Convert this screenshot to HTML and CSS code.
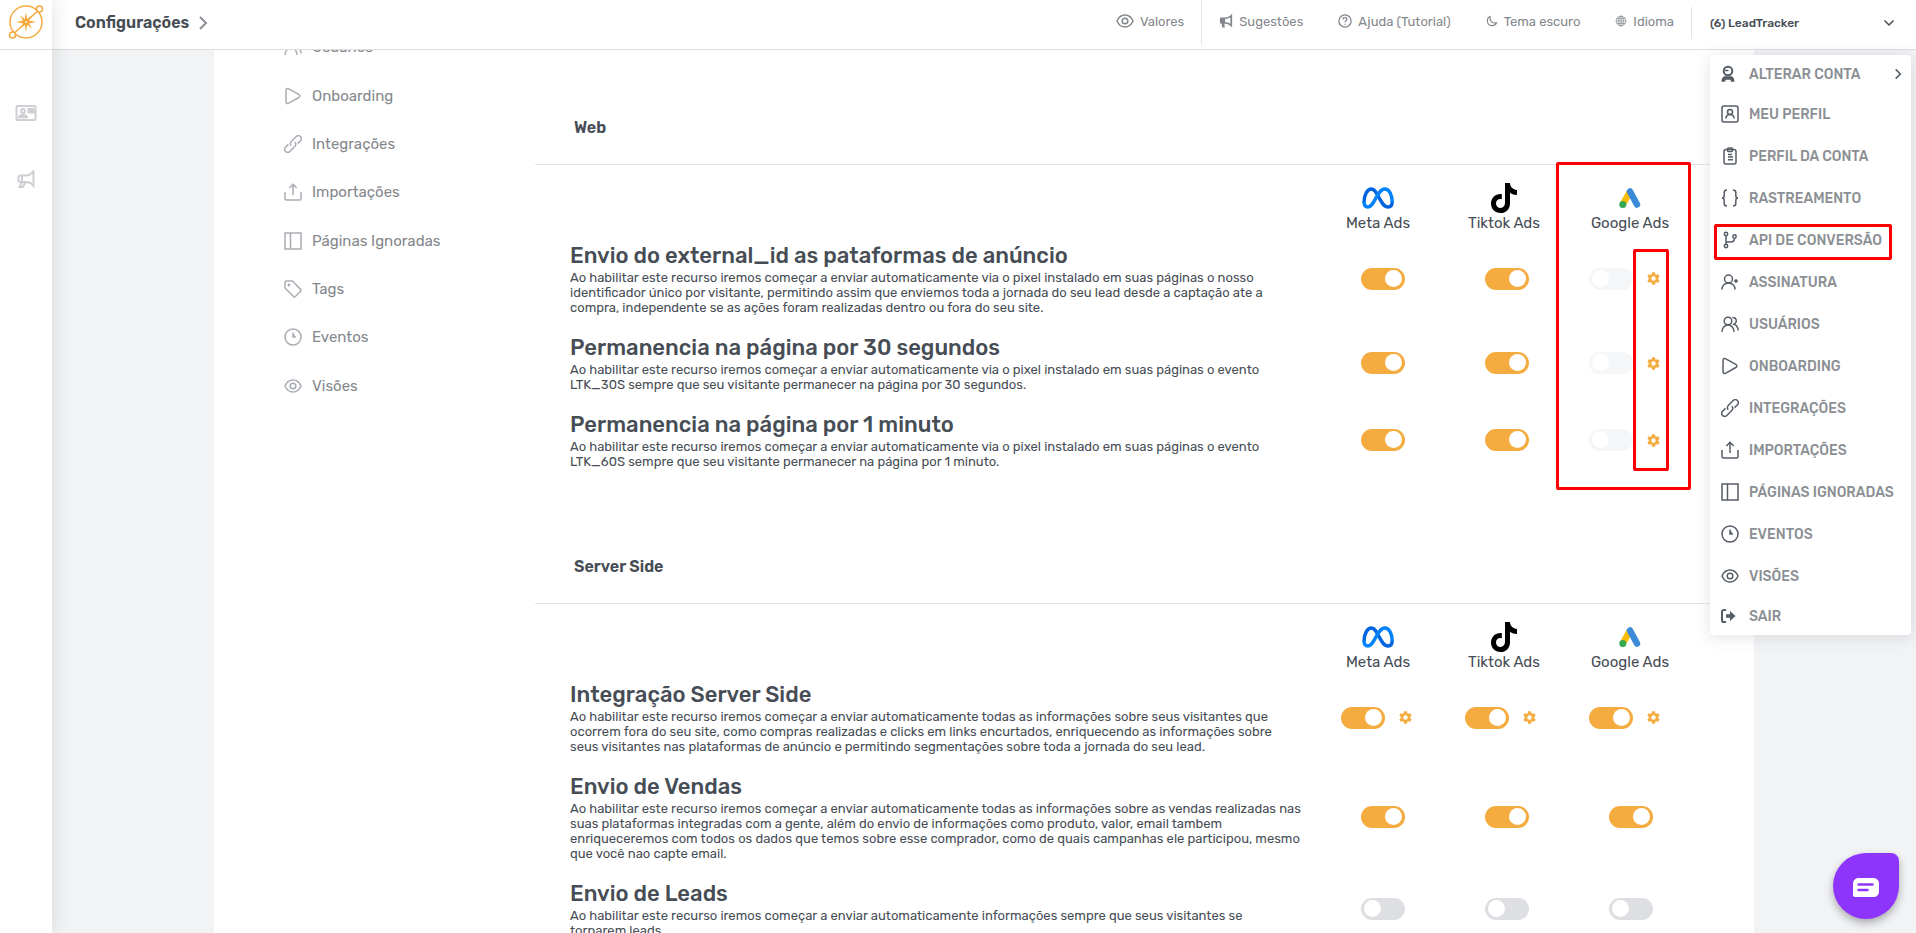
FILE: index.html
```html
<!DOCTYPE html>
<html lang="pt-BR">
<head>
    <meta charset="UTF-8">
    <meta name="viewport" content="width=device-width, initial-scale=1.0">
    <title>LeadTracker - Configurações</title>
    <link rel="stylesheet" href="styles.css">
</head>
<body>
  <svg class="sprite" aria-hidden="true">
    <symbol id="i-play" viewBox="0 0 18 18"><path d="M2 3.200C2 1.800 3.200 1 4.400 1.600l10.400 5.700c1.400.7 1.400 2.500 0 3.200L4.400 16.400C3.200 17 2 16.200 2 14.800z"/></symbol>
    <symbol id="i-link" viewBox="0 0 18 18"><g transform="rotate(-45 9 9)"><path d="M6.500 9a3 3 0 0 1 3-3h7a3 3 0 0 1 0 6h-4"/><path d="M11.500 9a3 3 0 0 1-3 3h-7a3 3 0 0 1 0-6h4"/></g></symbol>
    <symbol id="i-upload" viewBox="0 0 18 18"><path d="M1 9v6.500C1 16.400 1.600 17 2.500 17h13c.9 0 1.500-.6 1.500-1.500V9M9 12V1.500M5.300 5L9 1.300 12.700 5"/></symbol>
    <symbol id="i-columns" viewBox="0 0 18 18"><path d="M1 1h16v16H1zM6.500 1v16"/></symbol>
    <symbol id="i-tag" viewBox="0 0 18 18"><path d="M1 2v6l8.500 8.500c.6.600 1.200.6 1.800 0l5.300-5.300c.6-.6.6-1.200 0-1.800L8.500 1H2c-.6 0-1 .4-1 1z"/><circle cx="5" cy="5" r=".7"/></symbol>
    <symbol id="i-clock" viewBox="0 0 18 18"><circle cx="9" cy="9" r="8"/><path d="M9 4.500V9h3M10 6.500v2"/></symbol>
    <symbol id="i-eye" viewBox="0 0 18 18"><path d="M1 9c1.500-3.500 4.500-6 8-6s6.500 2.500 8 6c-1.500 3.500-4.500 6-8 6s-6.500-2.500-8-6z"/><circle cx="9" cy="9" r="2.800"/></symbol>
    <symbol id="i-users" viewBox="0 0 18 18"><circle cx="7" cy="6" r="3.800"/><path d="M1 17c0-4 2.500-7 6-7s6 3 6 7M11.500 2.400c2.800 0 3.800 1.600 3.800 3.500 0 1.600-.8 2.700-2.300 3.300 2.500.8 4 3.300 4.200 6.300"/></symbol>
    <symbol id="i-user-plus" viewBox="0 0 18 18"><circle cx="7.500" cy="6" r="4"/><path d="M1 16.500c0-3.800 2.800-6.500 6.500-6.500s6.500 2.700 6.500 6.500M15 6v4M13 8h4"/></symbol>
    <symbol id="i-profile" viewBox="0 0 18 18"><rect x="1" y="1" width="16" height="16" rx="2"/><circle cx="9" cy="7" r="2.500"/><path d="M4.800 13.500c.3-2.500 1.900-4 4.200-4s3.900 1.500 4.200 4"/></symbol>
    <symbol id="i-clip" viewBox="0 0 18 18"><rect x="3" y="2.500" width="12" height="14.500" rx="2"/><rect x="6.500" y="1" width="5" height="3.500" rx="1"/><path d="M7 7.500h4M7 10h5M7 12.800h5"/></symbol>
    <symbol id="i-braces" viewBox="0 0 18 18"><path d="M6 1C4 1 3.200 1.600 3.200 3.500v3C3.200 8 2.500 9 1 9c1.500 0 2.200 1 2.200 2.500v3C3.200 16.400 4 17 6 17M12 1c2 0 2.800.6 2.800 2.500v3C14.800 8 15.500 9 17 9c-1.500 0-2.200 1-2.200 2.500v3c0 1.900-.8 2.500-2.800 2.500"/></symbol>
    <symbol id="i-branch" viewBox="0 0 18 18"><circle cx="5" cy="3" r="1.700"/><circle cx="5" cy="15" r="1.700"/><circle cx="13.500" cy="5.500" r="1.700"/><path d="M5 4.700v8.600M13.500 7.200c0 2.300-1.500 3.800-4 3.800H5"/></symbol>
    <symbol id="i-agent" viewBox="0 0 18 18"><circle cx="7" cy="6" r="4.300" stroke-width="2"/><path d="M4 5.500h3.500"/><path class="solid" d="M.5 16.800c0-3.300 1.400-5.600 3.600-5.600h5.800c2.200 0 3.600 2.300 3.600 5.600h-3.400l-.8-2H4.800l-.8 2z"/></symbol>
    <symbol id="i-exit" viewBox="0 0 18 18"><path stroke-width="2" d="M5 3H2.800C1.600 3 1 3.700 1 4.800v8.400C1 14.300 1.600 15 2.800 15H5"/><path class="solid" d="M5 7.300h4V4l5.500 5L9 14v-3.300H5z"/></symbol>
    <symbol id="i-mega" viewBox="0 0 18 18"><path d="M16.500 1v15c-2-2.800-4.500-4-7.500-4H3.500C2 12 1.500 11.500 1.500 10V7.500C1.500 6 2 5.500 3.500 5.500H9c3 0 5.500-1.500 7.500-4.500zM5 5.500V12l-2.500 5h3.500L8.500 12"/></symbol>
    <symbol id="i-mega-solid" viewBox="0 0 16 16"><path class="solid" d="M1 5.500C1 4.500 1.500 4 2.500 4H7v7H6l.8 4.500H3.500L3 11c-1.300 0-2-.6-2-1.700z"/><path stroke-width="2" d="M7 5c3 0 5-1 7-3v11c-2-2-4-3-7-3"/></symbol>
    <symbol id="i-help" viewBox="0 0 16 16"><circle cx="8" cy="8" r="7"/><path d="M5.800 6.300c0-1.300.9-2.100 2.200-2.100s2.200.8 2.200 1.900c0 1.600-2.200 1.600-2.200 3.300M8 11v1.400"/></symbol>
    <symbol id="i-moon" viewBox="0 0 16 16"><path d="M5.500 2C3 3 1.800 5.200 1.800 7.800c0 3.600 2.800 6.400 6.400 6.400 2.700 0 4.900-1.400 5.900-3.900-5.600 1.300-9.600-2.700-8.600-8.300z"/></symbol>
    <symbol id="i-globe" viewBox="0 0 16 16"><circle cx="8" cy="8" r="6.500"/><ellipse cx="8" cy="8" rx="3" ry="6.500"/><path d="M8 1.500v13M1.500 8h13M2.500 4.800h11M2.500 11.200h11"/></symbol>
    <symbol id="i-card" viewBox="0 0 22 18"><rect x="1.500" y="2" width="19" height="14" rx="1"/><circle cx="8" cy="7" r="1.900"/><path d="M4 13.200c.4-1.600 2-2.200 4-2.200s3.600.6 4 2.200zM13.500 5h5v3.500h-5zM13.500 5.200L16 7l2.500-1.800"/></symbol>
    <symbol id="i-right" viewBox="0 0 12 18"><path d="M3 3l6 6-6 6"/></symbol>
    <symbol id="i-down" viewBox="0 0 12 12"><path d="M1.500 3.500L6 8l4.500-4.500"/></symbol>
    <symbol id="i-gear" viewBox="0 0 24 24"><path class="solid" fill-rule="evenodd" d="M19.430 12.980c.04-.32.07-.64.07-.98s-.03-.66-.07-.98l2.110-1.650c.19-.15.24-.42.12-.64l-2-3.460c-.12-.22-.39-.3-.61-.22l-2.490 1c-.52-.4-1.080-.73-1.690-.98l-.38-2.650C14.460 2.180 14.250 2 14 2h-4c-.25 0-.46.18-.49.42l-.38 2.650c-.61.25-1.170.59-1.690.98l-2.490-1c-.23-.09-.49 0-.61.22l-2 3.460c-.13.22-.07.49.12.64l2.110 1.650c-.04.32-.07.65-.07.98s.03.66.07.98l-2.110 1.650c-.19.15-.24.42-.12.64l2 3.460c.12.22.39.3.61.22l2.490-1c.52.4 1.080.73 1.690.98l.38 2.650c.03.24.24.42.49.42h4c.25 0 .46-.18.49-.42l.38-2.650c.61-.25 1.170-.59 1.690-.98l2.490 1c.23.09.49 0 .61-.22l2-3.460c.12-.22.07-.49-.12-.64zM12 15.500a3.500 3.500 0 1 1 0-7 3.500 3.500 0 0 1 0 7z"/></symbol>
    <symbol id="i-meta" viewBox="0 0 32 22">
      <path d="M2 15.500C2 8.500 5 2 9.500 2c6.500 0 8.500 18 16.500 18 3 0 4.200-2.200 4.200-5.500" stroke="#0064e0" stroke-width="3.400" fill="none"/>
      <path d="M2 14.500C2 18 3.200 20 6 20c6.500 0 9-18 16.800-18C27.500 2 30.200 8.500 30.200 15" stroke="#0082fb" stroke-width="3.400" fill="none"/>
    </symbol>
    <symbol id="i-tiktok" viewBox="0 0 26 30"><path fill="#000" d="M14 0h4.900c.3 3.800 2.800 6.600 7.100 7v5c-2.700 0-5-.8-7-2.200v10.600C19 26 14.900 30 9.500 30S0 25.900 0 20.500c0-5.700 4.700-10.100 10.800-9.400v5.200c-3.200-.9-5.800 1.200-5.800 4.100 0 2.600 2 4.500 4.500 4.500S14 23 14 20z"/></symbol>
    <symbol id="i-google" viewBox="0 0 22 20">
      <path d="M11 3.500L4 16" stroke="#fbbc04" stroke-width="6.500"/>
      <path d="M11 3.500L18 16.500" stroke="#3c8bd9" stroke-width="6.500" stroke-linecap="round"/>
      <circle cx="3.800" cy="16.500" r="3.500" fill="#34a853"/>
    </symbol>
  </svg>

  <aside class="sidebar">
    <a class="logo" href="#" aria-label="LeadTracker">
      <svg viewBox="0 0 36 36">
        <circle cx="18" cy="18" r="16"/>
        <circle class="dot" cx="31.500" cy="5" r="3"/>
        <circle class="dot" cx="4.500" cy="31" r="3"/>
        <path d="M29.300 7.200L21 15M6.700 28.800L15 21"/>
        <path class="solid" d="M18 8l1.200 6.900 4.900-3.700-3 5.300L28 18l-6.900 1.500 3 5.300-4.900-3.700L18 28l-1.200-6.900-4.900 3.700 3-5.300L8 18l6.900-1.500-3-5.300 4.900 3.700z"/>
        <circle class="dot" cx="18" cy="18" r="1.600"/>
      </svg>
    </a>
    <nav class="side-links">
      <a href="#" aria-label="Contatos"><svg class="icon-card"><use href="#i-card"/></svg></a>
      <a href="#" aria-label="Campanhas"><svg class="icon"><use href="#i-mega"/></svg></a>
    </nav>
  </aside>

  <div class="page">
    <header class="topbar">
      <h1>Configurações <svg class="crumb"><use href="#i-right"/></svg></h1>
      <nav class="top-links">
        <a class="values" href="#"><svg class="icon"><use href="#i-eye"/></svg>Valores</a>
        <a href="#"><svg class="icon-sm"><use href="#i-mega-solid"/></svg>Sugestões</a>
        <a href="#"><svg class="icon-sm"><use href="#i-help"/></svg>Ajuda (Tutorial)</a>
        <a href="#"><svg class="icon-xs"><use href="#i-moon"/></svg>Tema escuro</a>
        <a href="#"><svg class="icon-xs globe"><use href="#i-globe"/></svg>Idioma</a>
      </nav>
      <button class="account" type="button">(6) LeadTracker <svg class="caret"><use href="#i-down"/></svg></button>
    </header>

    <main class="main">
      <div class="card">
        <nav class="settings-menu">
          <a href="#"><svg class="icon"><use href="#i-users"/></svg>Usuários</a>
          <a href="#"><svg class="icon"><use href="#i-play"/></svg>Onboarding</a>
          <a href="#"><svg class="icon"><use href="#i-link"/></svg>Integrações</a>
          <a href="#"><svg class="icon"><use href="#i-upload"/></svg>Importações</a>
          <a href="#"><svg class="icon"><use href="#i-columns"/></svg>Páginas Ignoradas</a>
          <a href="#"><svg class="icon"><use href="#i-tag"/></svg>Tags</a>
          <a href="#"><svg class="icon"><use href="#i-clock"/></svg>Eventos</a>
          <a href="#"><svg class="icon"><use href="#i-eye"/></svg>Visões</a>
        </nav>

        <div class="content">
          <section class="group">
            <h2>Web</h2>
            <div class="platforms">
              <div class="platform"><svg class="meta"><use href="#i-meta"/></svg><span>Meta Ads</span></div>
              <div class="platform"><svg class="tiktok"><use href="#i-tiktok"/></svg><span>Tiktok Ads</span></div>
              <div class="platform"><svg class="google"><use href="#i-google"/></svg><span>Google Ads</span></div>
            </div>
            <div class="row">
              <div class="info">
                <h3>Envio do external_id as pataformas de anúncio</h3>
                <p>Ao habilitar este recurso iremos começar a enviar automaticamente via o pixel instalado em suas páginas o nosso identificador único por visitante, permitindo assim que enviemos toda a jornada do seu lead desde a captação ate a compra, independente se as ações foram realizadas dentro ou fora do seu site.</p>
              </div>
              <div class="cell"><input type="checkbox" class="toggle" aria-label="External id Meta Ads" checked></div>
              <div class="cell"><input type="checkbox" class="toggle" aria-label="External id Tiktok Ads" checked></div>
              <div class="cell"><input type="checkbox" class="toggle" aria-label="External id Google Ads" disabled><button class="gear" type="button" aria-label="Configurar"><svg><use href="#i-gear"/></svg></button></div>
            </div>
            <div class="row">
              <div class="info">
                <h3>Permanencia na página por 30 segundos</h3>
                <p>Ao habilitar este recurso iremos começar a enviar automaticamente via o pixel instalado em suas páginas o evento LTK_30S sempre que seu visitante permanecer na página por 30 segundos.</p>
              </div>
              <div class="cell"><input type="checkbox" class="toggle" aria-label="30 segundos Meta Ads" checked></div>
              <div class="cell"><input type="checkbox" class="toggle" aria-label="30 segundos Tiktok Ads" checked></div>
              <div class="cell"><input type="checkbox" class="toggle" aria-label="30 segundos Google Ads" disabled><button class="gear" type="button" aria-label="Configurar"><svg><use href="#i-gear"/></svg></button></div>
            </div>
            <div class="row">
              <div class="info">
                <h3>Permanencia na página por 1 minuto</h3>
                <p>Ao habilitar este recurso iremos começar a enviar automaticamente via o pixel instalado em suas páginas o evento LTK_60S sempre que seu visitante permanecer na página por 1 minuto.</p>
              </div>
              <div class="cell"><input type="checkbox" class="toggle" aria-label="1 minuto Meta Ads" checked></div>
              <div class="cell"><input type="checkbox" class="toggle" aria-label="1 minuto Tiktok Ads" checked></div>
              <div class="cell"><input type="checkbox" class="toggle" aria-label="1 minuto Google Ads" disabled><button class="gear" type="button" aria-label="Configurar"><svg><use href="#i-gear"/></svg></button></div>
            </div>
            <div class="mark mark-column"></div>
            <div class="mark mark-gears"></div>
          </section>

          <section class="group">
            <h2>Server Side</h2>
            <div class="platforms">
              <div class="platform"><svg class="meta"><use href="#i-meta"/></svg><span>Meta Ads</span></div>
              <div class="platform"><svg class="tiktok"><use href="#i-tiktok"/></svg><span>Tiktok Ads</span></div>
              <div class="platform"><svg class="google"><use href="#i-google"/></svg><span>Google Ads</span></div>
            </div>
            <div class="row">
              <div class="info">
                <h3>Integração Server Side</h3>
                <p>Ao habilitar este recurso iremos começar a enviar automaticamente todas as informações sobre seus visitantes que ocorrem fora do seu site, como compras realizadas e clicks em links encurtados, enriquecendo as informações sobre<br>seus visitantes nas plataformas de anúncio e permitindo segmentações sobre toda a jornada do seu lead.</p>
              </div>
              <div class="cell"><input type="checkbox" class="toggle" aria-label="Server Side Meta Ads" checked><button class="gear" type="button" aria-label="Configurar"><svg><use href="#i-gear"/></svg></button></div>
              <div class="cell"><input type="checkbox" class="toggle" aria-label="Server Side Tiktok Ads" checked><button class="gear" type="button" aria-label="Configurar"><svg><use href="#i-gear"/></svg></button></div>
              <div class="cell"><input type="checkbox" class="toggle" aria-label="Server Side Google Ads" checked><button class="gear" type="button" aria-label="Configurar"><svg><use href="#i-gear"/></svg></button></div>
            </div>
            <div class="row">
              <div class="info">
                <h3>Envio de Vendas</h3>
                <p>Ao habilitar este recurso iremos começar a enviar automaticamente todas as informações sobre as vendas realizadas nas suas plataformas integradas com a gente, além do envio de informações como produto, valor, email tambem enriqueceremos com todos os dados que temos sobre esse comprador, como de quais campanhas ele participou, mesmo que você nao capte email.</p>
              </div>
              <div class="cell"><input type="checkbox" class="toggle" aria-label="Vendas Meta Ads" checked></div>
              <div class="cell"><input type="checkbox" class="toggle" aria-label="Vendas Tiktok Ads" checked></div>
              <div class="cell"><input type="checkbox" class="toggle" aria-label="Vendas Google Ads" checked></div>
            </div>
            <div class="row">
              <div class="info">
                <h3>Envio de Leads</h3>
                <p>Ao habilitar este recurso iremos começar a enviar automaticamente informações sempre que seus visitantes se<br>tornarem leads.</p>
              </div>
              <div class="cell"><input type="checkbox" class="toggle" aria-label="Leads Meta Ads"></div>
              <div class="cell"><input type="checkbox" class="toggle" aria-label="Leads Tiktok Ads"></div>
              <div class="cell"><input type="checkbox" class="toggle" aria-label="Leads Google Ads"></div>
            </div>
          </section>
        </div>
      </div>
    </main>
  </div>

  <nav class="dropdown">
    <a class="first" href="#"><svg class="icon"><use href="#i-agent"/></svg>Alterar conta<svg class="more"><use href="#i-right"/></svg></a>
    <a href="#"><svg class="icon"><use href="#i-profile"/></svg>Meu perfil</a>
    <a href="#"><svg class="icon"><use href="#i-clip"/></svg>Perfil da conta</a>
    <a href="#"><svg class="icon"><use href="#i-braces"/></svg>Rastreamento</a>
    <a href="#"><svg class="icon"><use href="#i-branch"/></svg>API de conversão</a>
    <a href="#"><svg class="icon"><use href="#i-user-plus"/></svg>Assinatura</a>
    <a href="#"><svg class="icon"><use href="#i-users"/></svg>Usuários</a>
    <a href="#"><svg class="icon"><use href="#i-play"/></svg>Onboarding</a>
    <a href="#"><svg class="icon"><use href="#i-link"/></svg>Integrações</a>
    <a href="#"><svg class="icon"><use href="#i-upload"/></svg>Importações</a>
    <a href="#"><svg class="icon"><use href="#i-columns"/></svg>Páginas ignoradas</a>
    <a href="#"><svg class="icon"><use href="#i-clock"/></svg>Eventos</a>
    <a href="#"><svg class="icon"><use href="#i-eye"/></svg>Visões</a>
    <a class="last" href="#"><svg class="icon"><use href="#i-exit"/></svg>Sair</a>
    <div class="mark mark-api"></div>
  </nav>

  <button class="chat" type="button" aria-label="Abrir chat">
    <svg viewBox="0 0 26 20"><path class="bubble" d="M6 0h14c4 0 6 2.500 6 6v7c0 4-2.500 6-6 6H2c-1.300 0-2-.7-2-2V6c0-3.500 2-6 6-6z"/><path d="M5.500 6.500h14M5.500 12h9" stroke="#8e35fd" stroke-width="2.500" stroke-linecap="round"/></svg>
  </button>
</body>
</html>
```
FILE: styles.css
```css
*{
    margin: 0;
    padding: 0;
    box-sizing: border-box;
    font-family: Rubik, Inter, "Noto Sans", sans-serif;
}
body{
    display: flex;
    height: 100vh;
    overflow: hidden;
    background-color: #f2f3f5;
    color: #464d55;
}
a{
    color: inherit;
    text-decoration: none;
}
button{
    background: none;
    border: none;
    color: inherit;
    cursor: pointer;
}
svg{
    fill: none;
    stroke: currentColor;
    stroke-width: 1.5;
    flex-shrink: 0;
}
.solid{
    fill: currentColor;
    stroke: none;
}
.sprite{
    display: none;
}
.icon{
    width: 18px;
    height: 18px;
}
.icon-sm{
    width: 14px;
    height: 14px;
}
.icon-xs{
    width: 12px;
    height: 12px;
}
.globe{
    stroke-width: 1;
}

/* sidebar */
.sidebar{
    width: 52px;
    background-color: white;
    box-shadow: 0 0 20px rgba(70, 77, 85, 0.18);
    position: relative;
    z-index: 2;
}
.logo{
    display: flex;
    justify-content: center;
    height: 50px;
    padding-top: 4px;
    border-bottom: 1px solid #dcdee0;
    color: #f4ac40;
}
.logo svg{
    width: 36px;
    height: 36px;
}
.logo .dot{
    fill: white;
}
.side-links{
    display: flex;
    flex-direction: column;
    align-items: center;
    gap: 48px;
    padding-top: 54px;
    color: #cdcfd2;
}
.side-links a{
    display: flex;
}
.side-links svg{
    stroke-width: 2;
}
.icon-card{
    width: 22px;
    height: 18px;
}

/* topbar */
.page{
    flex: 1;
    min-width: 0;
    display: flex;
    flex-direction: column;
}
.topbar{
    height: 50px;
    display: flex;
    align-items: center;
    padding: 0 0 4px 23px;
    background-color: white;
    border-bottom: 1px solid #dcdee0;
}
.topbar h1{
    flex: 1;
    display: flex;
    align-items: center;
    gap: 8px;
    font-size: 16px;
    font-weight: 600;
}
.crumb{
    width: 12px;
    height: 18px;
    color: #8b8f94;
    stroke-width: 2;
}
.top-links{
    display: flex;
    align-items: center;
    align-self: stretch;
    gap: 35px;
    padding-right: 17px;
    font-size: 13px;
    color: #84888d;
}
.top-links a{
    display: flex;
    align-items: center;
    gap: 6px;
    padding-bottom: 3px;
}
.top-links .values{
    align-self: stretch;
    padding-right: 17px;
    margin-right: -18px;
    border-right: 1px solid #e3e4e6;
}
.account{
    width: 225px;
    height: 32px;
    display: flex;
    align-items: center;
    justify-content: space-between;
    padding: 0 21px 0 18px;
    border-left: 1px solid #e3e4e6;
    font-size: 12px;
    font-weight: 500;
}
.caret{
    width: 12px;
    height: 12px;
}

/* settings card */
.main{
    flex: 1;
    overflow: hidden;
    padding: 0 162px;
}
.card{
    display: flex;
    align-items: flex-start;
    min-height: 100%;
    background-color: white;
}
.settings-menu{
    display: flex;
    flex-direction: column;
    width: 321px;
    height: 387px;
    margin-top: -27px;
    padding-left: 70px;
    font-size: 15px;
    color: #84888d;
}
.settings-menu a{
    flex: 1;
    display: flex;
    align-items: center;
    gap: 10px;
}
.settings-menu .icon{
    color: #a9adb3;
}
.content{
    flex: 1;
    min-width: 0;
    padding-top: 40px;
}
.group{
    position: relative;
    margin-bottom: 41px;
}
.group h2{
    padding: 28px 39px 26px;
    border-bottom: 1px solid #e3e4e6;
    font-size: 16px;
    font-weight: 600;
    line-height: 20px;
}
.platforms{
    display: flex;
    justify-content: flex-end;
    padding: 18px 61px 9px 0;
}
.platform{
    width: 126px;
    display: flex;
    flex-direction: column;
    align-items: center;
    font-size: 15px;
    line-height: 20px;
}
.platform svg{
    height: 30px;
    stroke: none;
}
.meta{
    width: 32px;
}
.tiktok{
    width: 26px;
}
.google{
    width: 22px;
}
.row{
    display: flex;
    align-items: center;
    padding: 0 61px 19px 35px;
}
.info{
    flex: 1;
    padding-right: 15px;
}
.info h3{
    font-size: 22px;
    font-weight: 500;
    line-height: 28px;
}
.info p{
    font-size: 13px;
    line-height: 15px;
}
.cell{
    width: 124px;
    display: flex;
    align-items: center;
    justify-content: center;
}
.toggle{
    appearance: none;
    width: 44px;
    height: 22px;
    padding: 2px 3px;
    border-radius: 11px;
    background-color: #dedfe3;
    cursor: pointer;
}
.toggle::before{
    content: "";
    display: block;
    width: 17px;
    height: 17px;
    border-radius: 50%;
    background-color: white;
}
.toggle:checked{
    background-color: #f4ac40;
}
.toggle:checked::before{
    margin-left: auto;
}
.toggle:disabled{
    background-color: #f5f6f8;
}
.gear{
    width: 40px;
    height: 22px;
    display: flex;
    align-items: center;
    justify-content: center;
    color: #f4ac40;
}
.gear svg{
    width: 15px;
    height: 15px;
}

/* highlights */
.mark{
    position: absolute;
    border: 3px solid red;
    border-radius: 2px;
    pointer-events: none;
}
.mark-column{
    top: 72px;
    right: 63px;
    width: 135px;
    height: 328px;
}
.mark-gears{
    top: 159px;
    right: 85px;
    width: 36px;
    height: 222px;
}
.mark-api{
    top: 169px;
    left: 4px;
    width: 178px;
    height: 36px;
}

/* account menu */
.dropdown{
    position: absolute;
    top: 55px;
    right: 5px;
    z-index: 3;
    width: 201px;
    border-radius: 4px;
    background-color: white;
    box-shadow: 0 2px 16px rgba(70, 77, 85, 0.16);
    font-size: 14px;
    font-weight: 500;
    text-transform: uppercase;
    color: #8b8f94;
}
.dropdown a{
    display: flex;
    align-items: center;
    gap: 10px;
    height: 42px;
    padding: 0 8px 0 11px;
}
.dropdown .first,
.dropdown .last{
    height: 38px;
}
.dropdown svg{
    color: #565d66;
}
.dropdown .more{
    width: 10px;
    height: 14px;
    margin-left: auto;
    stroke-width: 2;
}

.chat{
    position: fixed;
    right: 17px;
    bottom: 14px;
    z-index: 3;
    width: 66px;
    height: 66px;
    display: flex;
    align-items: center;
    justify-content: center;
    padding-top: 4px;
    border-radius: 50% 8px 50% 50%;
    background-color: #8e35fd;
    box-shadow: 0 4px 8px rgba(0, 0, 0, 0.3);
}
.chat svg{
    width: 26px;
    height: 20px;
}
.chat .bubble{
    fill: white;
    stroke: none;
}
```
